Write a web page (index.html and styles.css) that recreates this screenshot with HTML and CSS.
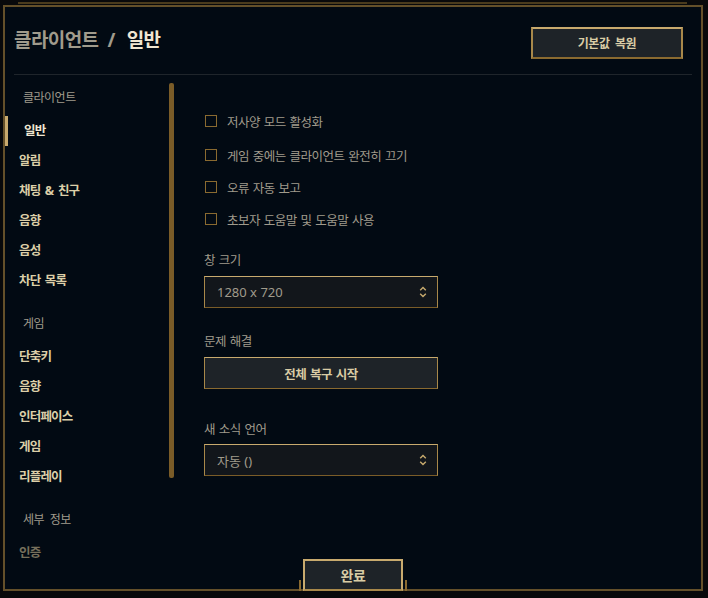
FILE: index.html
```html
<!DOCTYPE html>
<html lang="ko">
<head>
    <meta charset="UTF-8">
    <meta name="viewport" content="width=device-width, initial-scale=1.0">
    <title>설정 - 일반</title>
    <link rel="stylesheet" href="styles.css">
</head>
<body>

<div class="modal">
    <!-- 상단 제목 -->
    <div class="modal-header">
        <h1 class="title">클라이언트<span class="sep">/</span><span class="current">일반</span></h1>
        <button class="btn btn-reset">기본값 복원</button>
    </div>
    <div class="divider"></div>

    <div class="modal-body">
        <!-- 왼쪽 메뉴 -->
        <nav class="sidebar">
            <div class="nav-heading first">클라이언트</div>
            <div class="nav-item active">일반</div>
            <div class="nav-item">알림</div>
            <div class="nav-item">채팅 &amp; 친구</div>
            <div class="nav-item">음향</div>
            <div class="nav-item">음성</div>
            <div class="nav-item">차단 목록</div>

            <div class="nav-heading">게임</div>
            <div class="nav-item">단축키</div>
            <div class="nav-item">음향</div>
            <div class="nav-item">인터페이스</div>
            <div class="nav-item">게임</div>
            <div class="nav-item">리플레이</div>

            <div class="nav-heading">세부 정보</div>
            <div class="nav-item dim">인증</div>
        </nav>
        <div class="scrollbar"></div>

        <!-- 설정 내용 -->
        <div class="content">
            <div class="checks">
                <label class="check-row first"><span class="box"></span>저사양 모드 활성화</label>
                <label class="check-row"><span class="box"></span>게임 중에는 클라이언트 완전히 끄기</label>
                <label class="check-row"><span class="box"></span>오류 자동 보고</label>
                <label class="check-row"><span class="box"></span>초보자 도움말 및 도움말 사용</label>
            </div>

            <div class="group group-size">
                <div class="group-label">창 크기</div>
                <div class="select">
                    <span>1280 x 720</span>
                    <svg width="8" height="14" viewBox="0 0 8 14"><path d="M1.2 5.2 L4 2.4 L6.8 5.2 M1.2 8.8 L4 11.6 L6.8 8.8" stroke="#c8aa6e" stroke-width="1.4" fill="none"/></svg>
                </div>
            </div>

            <div class="group group-repair">
                <div class="group-label">문제 해결</div>
                <button class="btn btn-wide">전체 복구 시작</button>
            </div>

            <div class="group group-lang">
                <div class="group-label">새 소식 언어</div>
                <div class="select">
                    <span>자동 ()</span>
                    <svg width="8" height="14" viewBox="0 0 8 14"><path d="M1.2 5.2 L4 2.4 L6.8 5.2 M1.2 8.8 L4 11.6 L6.8 8.8" stroke="#c8aa6e" stroke-width="1.4" fill="none"/></svg>
                </div>
            </div>
        </div>
    </div>

    <!-- 하단 완료 버튼 -->
    <div class="done-frame"></div>
    <button class="btn btn-done">완료</button>
</div>

</body>
</html>
```

FILE: styles.css
```css
body {
    margin: 0;
    background-color: #08090b;
    font-family: "Noto Sans", "Noto Sans CJK KR", sans-serif;
    color: #a09b8c;
}

.modal {
    position: relative;
    box-sizing: border-box;
    width: 700px;
    height: 586px;
    margin: 5px 0 0 3px;
    background-color: #020a13;
    border: 2px solid #64502a;
}

/* 뒤쪽 장식 테두리 */
.modal::before {
    content: "";
    position: absolute;
    top: -5px;
    left: 13px;
    right: 14px;
    height: 2px;
    background-color: #4a3b1d;
}

.modal-header {
    display: flex;
    justify-content: space-between;
    align-items: flex-start;
    padding: 20px 18px 15px 9px;
}

.title {
    margin: 0;
    font-size: 19px;
    line-height: 26px;
    font-weight: bold;
    letter-spacing: -0.6px;
    color: #a09b8c;
}

.title .sep {
    margin: 0 12px 0 9px;
}

.title .current {
    color: #f0e6d2;
}

.btn {
    box-sizing: border-box;
    font-family: "Noto Sans", "Noto Sans CJK KR", sans-serif;
    font-weight: bold;
    font-size: 12px;
    letter-spacing: -0.5px;
    color: #d9cca5;
    background-color: #1e2328;
    border: 2px solid #a8884a;
    border-top-color: #c8aa6e;
    border-bottom-color: #8a6a30;
    cursor: pointer;
}

.btn-reset {
    width: 152px;
    height: 32px;
    word-spacing: 3px;
}

.divider {
    height: 1px;
    margin: 0 9px;
    background-color: #1f252b;
}

.modal-body {
    display: flex;
}

.sidebar {
    width: 164px;
    padding-top: 8px;
}

.nav-heading {
    height: 30px;
    line-height: 30px;
    padding-left: 18px;
    margin: 13px 0 3px;
    font-size: 12px;
    letter-spacing: -0.5px;
    word-spacing: 3px;
    color: #a09b8c;
}

.nav-heading.first {
    margin-top: 0;
}

.nav-item {
    height: 30px;
    line-height: 30px;
    padding-left: 14px;
    font-size: 12.5px;
    font-weight: bold;
    letter-spacing: -0.8px;
    word-spacing: 2px;
    color: #dccfa8;
}

.nav-item.active {
    padding-left: 16px;
    border-left: 3px solid #c8aa6e;
    color: #f0e6d2;
}

.nav-item.dim {
    color: #77705c;
}

.scrollbar {
    width: 5px;
    height: 395px;
    margin-top: 8px;
    border-radius: 2px;
    background-color: #7a5c28;
}

.content {
    margin-left: 30px;
    padding-top: 30px;
    width: 234px;
}

.check-row {
    display: flex;
    align-items: center;
    gap: 10px;
    height: 32px;
    font-size: 12.5px;
    letter-spacing: -0.5px;
    word-spacing: 1px;
    color: #a09b8c;
}

.check-row.first {
    margin-bottom: 2px;
}

.box {
    box-sizing: border-box;
    width: 12px;
    height: 12px;
    margin-left: 1px;
    border: 1px solid #8a6a30;
}

.group-label {
    line-height: 20px;
    padding-top: 2px;
    margin-bottom: 5px;
    font-size: 12.5px;
    letter-spacing: -0.5px;
    word-spacing: 1px;
    color: #a09b8c;
}

.group-size {
    margin-top: 14px;
}

.group-repair {
    margin-top: 22px;
}

.group-lang {
    margin-top: 29px;
}

.group-lang .group-label {
    margin-bottom: 4px;
}

.select {
    box-sizing: border-box;
    display: flex;
    justify-content: space-between;
    align-items: center;
    height: 32px;
    padding: 0 10px 0 12px;
    background-color: #12161b;
    border: 1px solid #a8884a;
    border-top-color: #c8aa6e;
    border-bottom-color: #7a5c28;
    font-size: 13px;
    color: #a09b8c;
}

.btn-wide {
    display: block;
    width: 234px;
    height: 32px;
    border-width: 1px;
    font-size: 12.5px;
    word-spacing: 1px;
}

/* 완료 버튼은 아래 테두리 위에 걸쳐 있음 */
.done-frame {
    position: absolute;
    left: 294px;
    bottom: -2px;
    width: 104px;
    height: 11px;
    border-left: 2px solid #8a6a30;
    border-right: 2px solid #8a6a30;
}

.btn-done {
    position: absolute;
    left: 298px;
    bottom: -2px;
    width: 100px;
    height: 32px;
    font-size: 14px;
    border-color: #c8aa6e;
    border-bottom-color: #a8884a;
}
```
